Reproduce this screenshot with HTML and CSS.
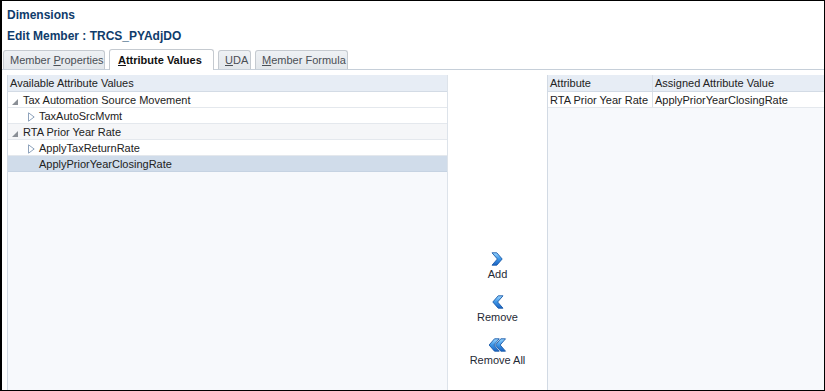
FILE: index.html
```html
<!DOCTYPE html>
<html>
<head>
<meta charset="utf-8">
<link rel="stylesheet" href="styles.css">
</head>
<body>
<div class="frame">
  <div class="titles">
    <div class="t1">Dimensions</div>
    <div class="t2">Edit Member : TRCS_PYAdjDO</div>
  </div>
  <div class="tabs">
    <div class="tab">Member <u>P</u>roperties</div>
    <div class="tab active"><u>A</u>ttribute Values</div>
    <div class="tab"><u>U</u>DA</div>
    <div class="tab"><u>M</u>ember Formula</div>
  </div>
  <div class="content">
    <div class="panel left">
      <div class="hdr"><span class="cell">Available Attribute Values</span></div>
      <div class="row parent"><span class="exp"><svg width="6" height="6" viewBox="0 0 6 6"><path d="M6 0 L6 6 L0 6 Z" fill="#8a8f96"/></svg></span>Tax Automation Source Movement</div>
      <div class="row child"><span class="col"><svg width="7" height="10" viewBox="0 0 7 10"><path d="M0.5 0.8 L6.2 5 L0.5 9.2 Z" fill="#fff" stroke="#8fa3bc" stroke-width="1"/></svg></span>TaxAutoSrcMvmt</div>
      <div class="row parent alt"><span class="exp"><svg width="6" height="6" viewBox="0 0 6 6"><path d="M6 0 L6 6 L0 6 Z" fill="#8a8f96"/></svg></span>RTA Prior Year Rate</div>
      <div class="row child"><span class="col"><svg width="7" height="10" viewBox="0 0 7 10"><path d="M0.5 0.8 L6.2 5 L0.5 9.2 Z" fill="#fff" stroke="#8fa3bc" stroke-width="1"/></svg></span>ApplyTaxReturnRate</div>
      <div class="row leaf selected">ApplyPriorYearClosingRate</div>
    </div>
    <div class="mid">
      <div class="btn">
        <svg width="14" height="14" viewBox="0 0 14 14">
          <defs><linearGradient id="g1" x1="0" y1="0" x2="0" y2="1"><stop offset="0" stop-color="#9ad6ff"/><stop offset="0.5" stop-color="#3d95e6"/><stop offset="1" stop-color="#1a63c4"/></linearGradient></defs>
          <path d="M2 0.8 L6.8 0.8 L12.2 7 L6.8 13.2 L2 13.2 L7.4 7 Z" fill="url(#g1)" stroke="#1b5aa8" stroke-width="0.9" stroke-linejoin="round"/>
        </svg>
        <span>Add</span>
      </div>
      <div class="btn">
        <svg width="14" height="14" viewBox="0 0 14 14">
          <defs><linearGradient id="g2" x1="0" y1="0" x2="0" y2="1"><stop offset="0" stop-color="#9ad6ff"/><stop offset="0.5" stop-color="#3d95e6"/><stop offset="1" stop-color="#1a63c4"/></linearGradient></defs>
          <path d="M12 0.8 L7.2 0.8 L1.8 7 L7.2 13.2 L12 13.2 L6.6 7 Z" fill="url(#g2)" stroke="#1b5aa8" stroke-width="0.9" stroke-linejoin="round"/>
        </svg>
        <span>Remove</span>
      </div>
      <div class="btn">
        <svg width="19" height="14" viewBox="0 0 19 14">
          <defs><linearGradient id="g3" x1="0" y1="0" x2="0" y2="1"><stop offset="0" stop-color="#9ad6ff"/><stop offset="0.5" stop-color="#3d95e6"/><stop offset="1" stop-color="#1a63c4"/></linearGradient></defs>
          <path d="M17.5 0.8 L12.8 0.8 L7.4 7 L12.8 13.2 L17.5 13.2 L12.2 7 Z" fill="url(#g3)" stroke="#1b5aa8" stroke-width="0.9" stroke-linejoin="round"/>
          <path d="M11.2 0.8 L6.5 0.8 L1.1 7 L6.5 13.2 L11.2 13.2 L5.9 7 Z" fill="url(#g3)" stroke="#1b5aa8" stroke-width="0.9" stroke-linejoin="round"/>
        </svg>
        <span>Remove All</span>
      </div>
    </div>
    <div class="panel right">
      <div class="hdr grid">
        <span class="cell c1">Attribute</span>
        <span class="cell c2">Assigned Attribute Value</span>
      </div>
      <div class="row grid data">
        <span class="cell c1">RTA Prior Year Rate</span>
        <span class="cell c2">ApplyPriorYearClosingRate</span>
      </div>
    </div>
  </div>
</div>
</body>
</html>
```
FILE: styles.css
```css
* { box-sizing: border-box; }
html, body { margin: 0; padding: 0; background: #fff; }
body { font-family: "Liberation Sans", Arial, sans-serif; font-size: 11px; color: #222; }

.frame {
  width: 825px;
  height: 391px;
  border: 1px solid #000;
  border-left-width: 2px;
  display: flex;
  flex-direction: column;
  overflow: hidden;
}

.titles { padding: 5px 0 0 5px; color: #0f3c6b; font-weight: bold; font-size: 12px; }
.t1 { height: 18px; line-height: 18px; }
.t2 { height: 18px; line-height: 18px; margin-top: 3px; }

.tabs {
  margin-top: 5px;
  height: 20px;
  display: flex;
  align-items: flex-end;
  gap: 4px;
  padding-left: 1px;
  border-bottom: 1px solid #c6cfd9;
}
.tab {
  height: 19px;
  line-height: 19px;
  padding: 0 0 0 6px;
  background: linear-gradient(#eef1f4, #e3e7eb);
  border: 1px solid #c5cad0;
  border-bottom: none;
  border-radius: 3px 3px 0 0;
  color: #4a4f55;
  white-space: nowrap;
}
.tab.active {
  height: 21px;
  margin-bottom: -1px;
  background: #fff;
  color: #111;
  font-weight: bold;
  padding-left: 8px;
  line-height: 21px;
}
.tab:nth-child(1) { width: 102px; }
.tab:nth-child(2) { width: 105px; }
.tab:nth-child(3) { width: 33px; }
.tab:nth-child(4) { width: 93px; }

.content {
  flex: 1;
  display: flex;
  padding: 5px 0 0 5px;
}

.panel {
  background: #f7f9fc;
  border-left: 1px solid #d2dae4;
}
.panel.left { width: 441px; border-right: 1px solid #dde3ea; }
.panel.right { flex: 1; }

.hdr {
  height: 17px;
  padding-top: 2px;
  line-height: 13px;
  background: #e7edf5;
  border-bottom: 1px solid #d3dbe5;
  color: #222;
}
.hdr .cell { padding-left: 2px; }

.row {
  height: 16px;
  padding-top: 2px;
  line-height: 13px;
  background: #fff;
  border-bottom: 1px solid #e4e8ed;
  color: #222;
  display: flex;
  align-items: flex-start;
  white-space: nowrap;
}
.row.alt { background: #f5f6f8; }
.row.parent { padding-left: 4px; }
.row.child { padding-left: 20px; }
.row.leaf { padding-left: 31px; }
.row.selected { background: #d0dcea; border-bottom-color: #c6d3e2; }

.exp { width: 6px; height: 6px; display: inline-flex; margin-right: 5px; margin-top: 5px; }
.col { width: 7px; height: 10px; display: inline-flex; margin-right: 4px; margin-top: 1.5px; }

.grid { display: grid; grid-template-columns: 105px 1fr; }
.grid .cell { padding-left: 2px; overflow: hidden; }
.grid .c1 { border-right: 1px solid #d9dfe7; margin-top: -2px; padding-top: 2px; }
.row.data { display: grid; }

.mid {
  width: 99px;
  background: #fff;
  display: flex;
  flex-direction: column;
  align-items: center;
  padding-top: 177px;
  gap: 14px;
}
.btn {
  display: flex;
  flex-direction: column;
  align-items: center;
  gap: 1px;
  color: #1f2a36;
}
.btn svg { display: block; }
.btn span { line-height: 14px; height: 14px; }
```
